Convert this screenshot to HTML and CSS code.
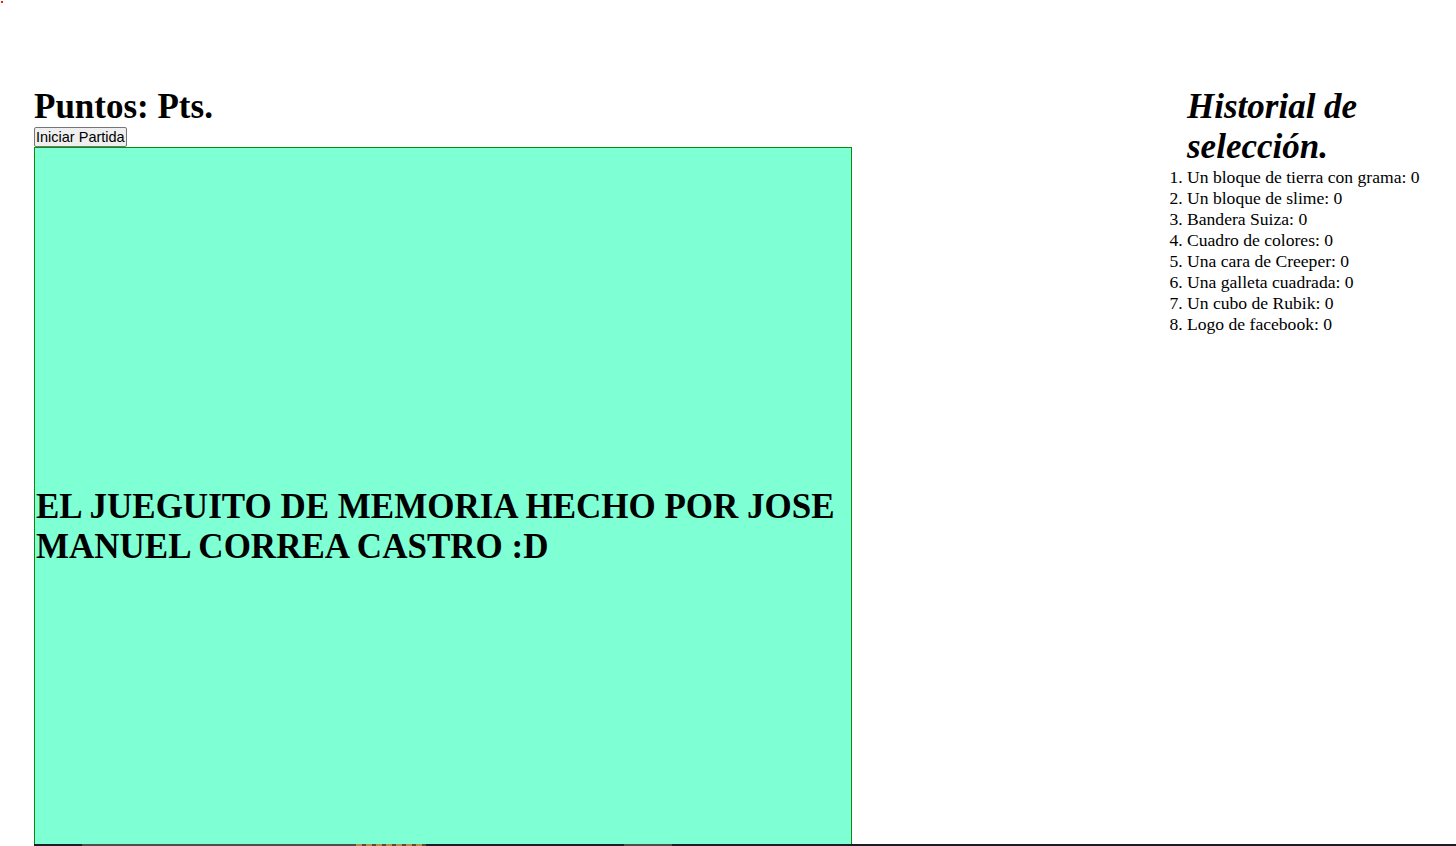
FILE: index.html
```html
<!DOCTYPE html>
<html lang="es">
<head>
<meta charset="utf-8">
<title>Juego de memoria</title>
<link rel="stylesheet" href="styles.css">
</head>
<body>
<span class="dot"></span>
<div class="page">
  <div class="left">
    <h1 class="score">Puntos: Pts.</h1>
    <button class="start" type="button">Iniciar Partida</button>
    <div class="board">
      <h1 class="title">EL JUEGUITO DE MEMORIA HECHO POR JOSE MANUEL CORREA CASTRO :D</h1>
    </div>
  </div>
  <div class="right">
    <h1 class="hist">Historial de selección.</h1>
    <ol class="list">
      <li>Un bloque de tierra con grama: 0</li>
      <li>Un bloque de slime: 0</li>
      <li>Bandera Suiza: 0</li>
      <li>Cuadro de colores: 0</li>
      <li>Una cara de Creeper: 0</li>
      <li>Una galleta cuadrada: 0</li>
      <li>Un cubo de Rubik: 0</li>
      <li>Logo de facebook: 0</li>
    </ol>
  </div>
</div>
<div class="strip">
  <span class="seg dark1"></span>
  <span class="seg gray1"></span>
  <span class="seg gold"></span>
  <span class="seg dark2"></span>
  <span class="seg gray2"></span>
  <span class="seg dark3"></span>
</div>
</body>
</html>
```

FILE: styles.css
```css
html, body {
  margin: 0;
  padding: 0;
  background: #ffffff;
  color: #000000;
  font-family: "Liberation Serif", "Times New Roman", serif;
  overflow: hidden;
}

.dot {
  position: absolute;
  left: 1px;
  top: 1px;
  width: 2px;
  height: 2px;
  background: #e8201c;
}

.page {
  display: flex;
  align-items: flex-start;
  padding: 88px 0 0 34px;
}

.left {
  display: flex;
  flex-direction: column;
  align-items: flex-start;
  width: 818px;
}

.score {
  font-size: 35px;
  font-weight: bold;
  margin: 0 0 2px;
  line-height: 37px;
}

.start {
  font-family: "Liberation Sans", Arial, sans-serif;
  font-size: 14.5px;
  margin: 0;
  padding: 1px 1px;
  height: 20px;
  line-height: 15px;
  border: 1px solid #767676;
  border-radius: 2px;
  background: #efefef;
  color: #000;
}

.board {
  box-sizing: border-box;
  width: 818px;
  height: 698px;
  background: #7fffd4;
  border: 1px solid #0b8a0b;
  display: flex;
  align-items: center;
  padding-top: 62px;
}

.title {
  font-size: 35px;
  font-weight: bold;
  line-height: 40px;
  margin: 0;
  padding-left: 1px;
}

.right {
  width: 261px;
  margin: -1px 0 0 335px;
}

.hist {
  font-size: 35px;
  font-style: italic;
  font-weight: bold;
  line-height: 40px;
  margin: 0;
}

.list {
  margin: 0;
  padding: 0;
  font-size: 17.6px;
  line-height: 21px;
}

.strip {
  display: flex;
  margin: -1px 0 0 34px;
  height: 2px;
  background: #1d1c2b;
}

.seg {
  height: 2px;
  display: block;
}

.dark1 { width: 48px; background: #1d1c2b; }
.gray1 { width: 274px; background: #4e4e52; }
.gold { width: 70px; background: repeating-linear-gradient(90deg, #b98b4e 0 6px, #5a4b39 6px 10px); }
.dark2 { width: 198px; background: #1d1c2b; }
.gray2 { width: 48px; background: #4e4e52; }
.dark3 { flex: 1; background: #1d1c2b; }
```
